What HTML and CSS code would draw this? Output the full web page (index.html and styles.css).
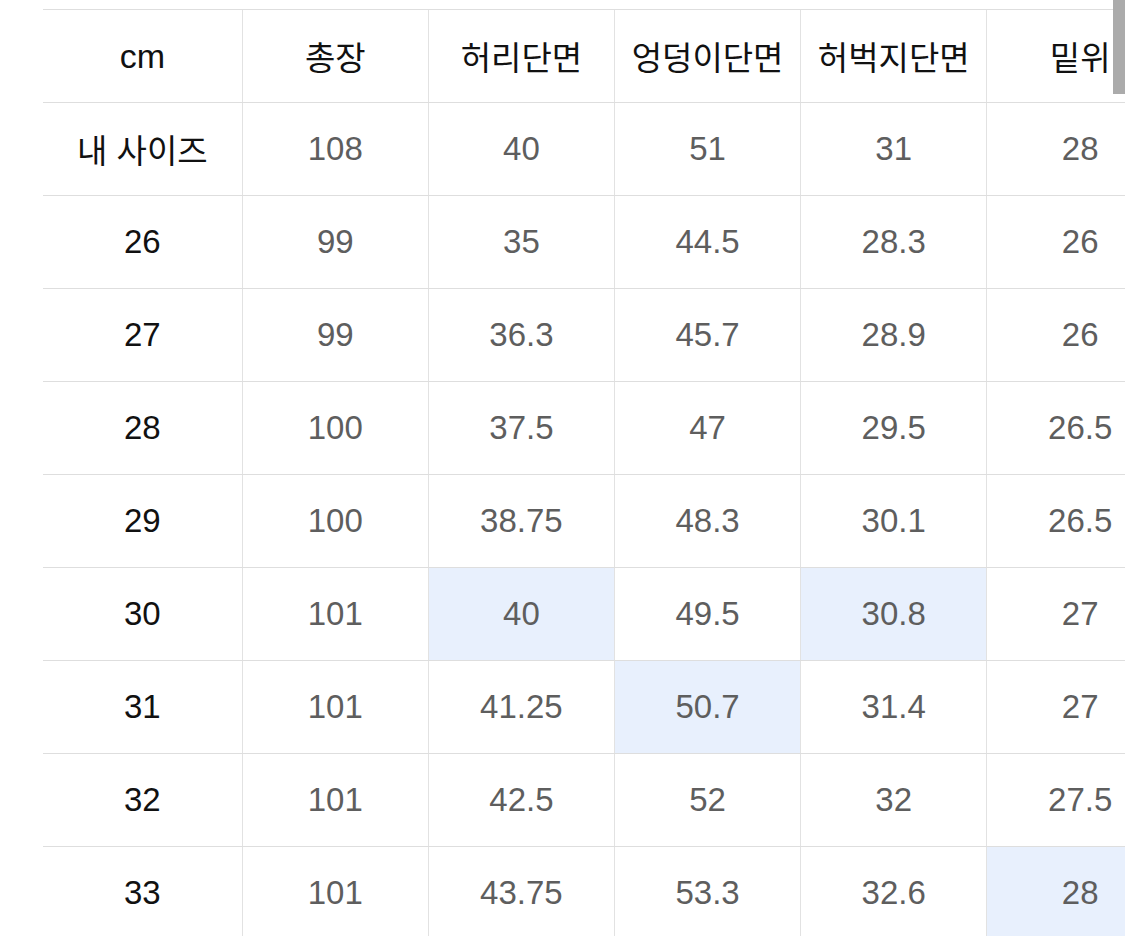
FILE: index.html
```html
<!DOCTYPE html>
<html lang="ko">
<head>
<meta charset="utf-8">
<title>사이즈표</title>
<link rel="stylesheet" href="styles.css">
</head>
<body>
<div class="wrap">
  <table class="size-table">
    <colgroup>
      <col class="c-first"><col class="c"><col class="c"><col class="c"><col class="c"><col class="c">
    </colgroup>
    <thead>
      <tr><th>cm</th><th>총장</th><th>허리단면</th><th>엉덩이단면</th><th>허벅지단면</th><th>밑위</th></tr>
    </thead>
    <tbody>
      <tr><th>내 사이즈</th><td>108</td><td>40</td><td>51</td><td>31</td><td>28</td></tr>
      <tr><th>26</th><td>99</td><td>35</td><td>44.5</td><td>28.3</td><td>26</td></tr>
      <tr><th>27</th><td>99</td><td>36.3</td><td>45.7</td><td>28.9</td><td>26</td></tr>
      <tr><th>28</th><td>100</td><td>37.5</td><td>47</td><td>29.5</td><td>26.5</td></tr>
      <tr><th>29</th><td>100</td><td>38.75</td><td>48.3</td><td>30.1</td><td>26.5</td></tr>
      <tr><th>30</th><td>101</td><td class="hl">40</td><td>49.5</td><td class="hl">30.8</td><td>27</td></tr>
      <tr><th>31</th><td>101</td><td>41.25</td><td class="hl">50.7</td><td>31.4</td><td>27</td></tr>
      <tr><th>32</th><td>101</td><td>42.5</td><td>52</td><td>32</td><td>27.5</td></tr>
      <tr><th>33</th><td>101</td><td>43.75</td><td>53.3</td><td>32.6</td><td class="hl">28</td></tr>
    </tbody>
  </table>
</div>
<div class="scrollbar"></div>
</body>
</html>
```
FILE: styles.css
```css
html, body {
  margin: 0;
  padding: 0;
  overflow: hidden;
  background: #ffffff;
  width: 1125px;
  height: 936px;
}
body {
  font-family: "Liberation Sans", "Noto Sans CJK KR", sans-serif;
  position: relative;
}
.wrap {
  margin-left: 43px;
  padding-top: 9px;
  width: 1082px;
  height: 927px;
  overflow: hidden;
}
.size-table {
  border-collapse: collapse;
  table-layout: fixed;
  width: 1130px;
}
.c-first { width: 199px; }
.c { width: 186px; }
.size-table th,
.size-table td {
  height: 92px;
  padding: 0;
  text-align: center;
  vertical-align: middle;
  font-size: 33px;
  font-weight: 400;
  border-top: 1px solid #dedede;
  border-bottom: 1px solid #dedede;
  border-left: 1px solid #e2e2e2;
}
.size-table tr > :first-child {
  border-left: none;
}
.size-table thead th:first-child {
  font-size: 34px;
}
.size-table th {
  color: #111111;
}
.size-table td {
  color: #5e5e5e;
}
.size-table td.hl {
  background: #e8f0fd;
}
.scrollbar {
  position: absolute;
  top: 0;
  right: 0;
  width: 12px;
  height: 94px;
  background: #ababab;
}
```
